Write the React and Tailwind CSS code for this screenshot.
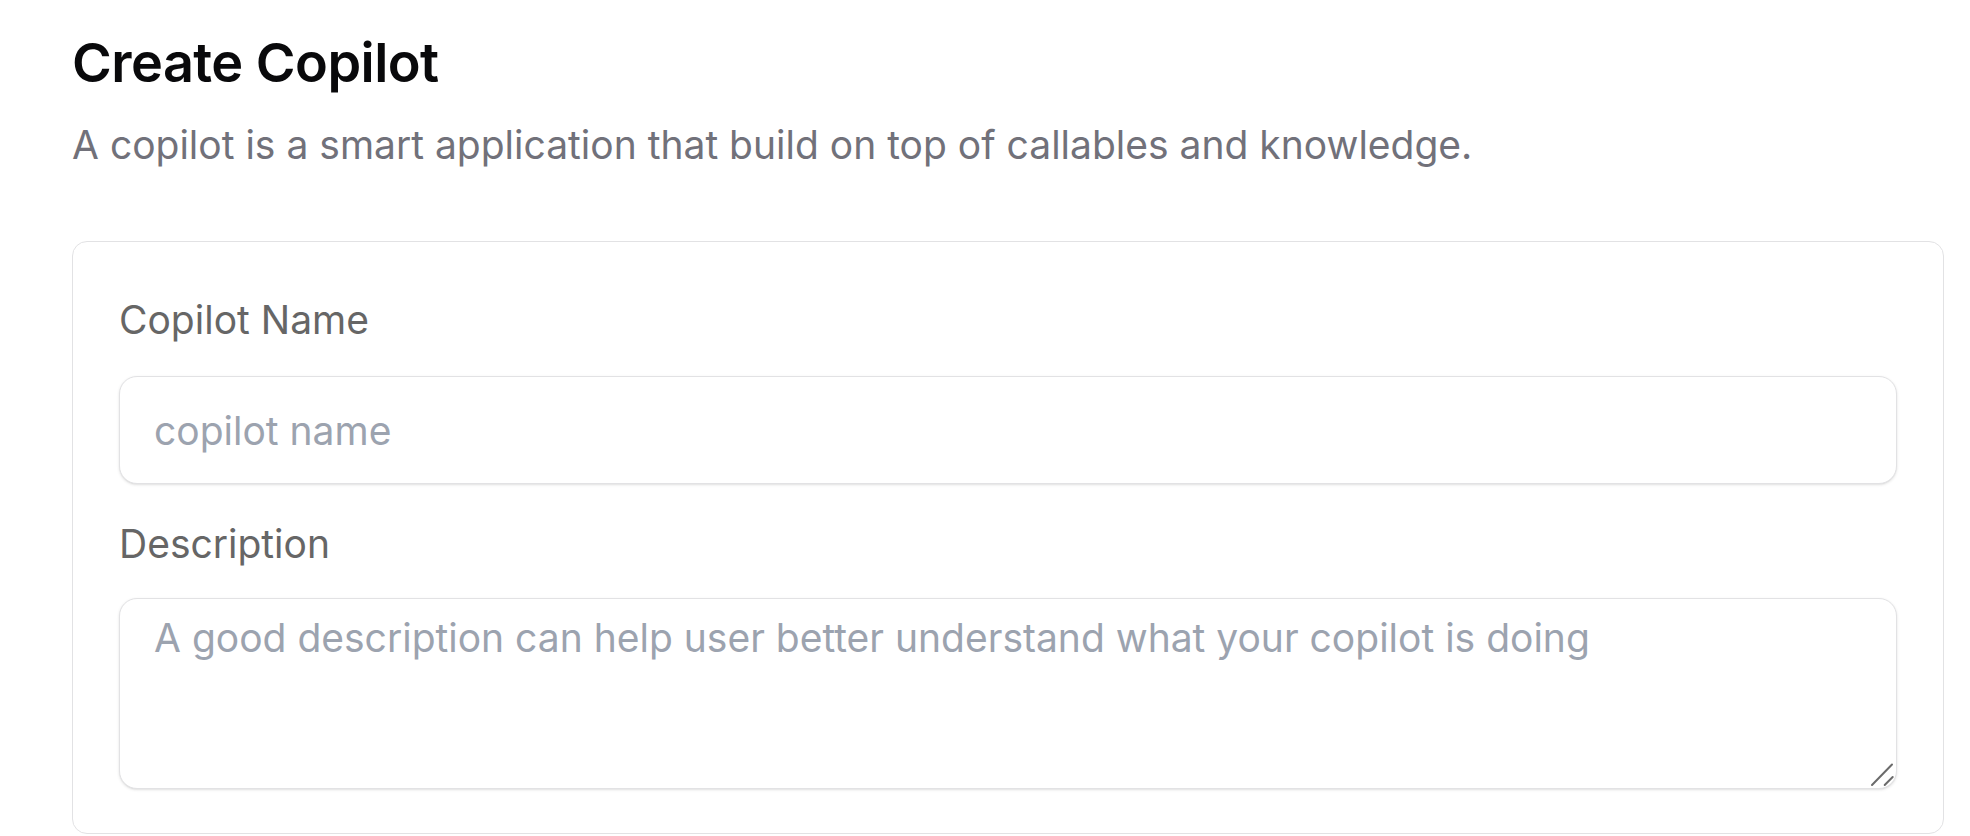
export default function App() {
  return (
    <div
      className="min-h-screen bg-white pl-[72px] pr-[26px] pt-[33px]"
      style={{ fontFamily: "Inter, 'Noto Sans', sans-serif" }}
    >
      <h1 className="text-[54px] leading-[60px] font-semibold tracking-[-0.01em] text-[#09090b]">
        Create Copilot
      </h1>
      <p className="mt-[26px] text-[39px] leading-[52px] text-[#71717a]">
        A copilot is a smart application that build on top of callables and knowledge.
      </p>
      <div className="mt-[70px] rounded-[15px] border border-[#e2e2e4] bg-white px-[46px] pt-[49px] pb-[44px]">
        <div className="flex flex-col">
          <label className="text-[39px] leading-[58px] text-[#666666]">Copilot Name</label>
          <input
            type="text"
            placeholder="copilot name"
            className="mt-[27px] h-[108px] w-full rounded-[18px] border border-[#e2e2e4] bg-white px-[34px] text-[39px] text-[#09090b] shadow-sm outline-none placeholder:text-[#9ca3af]"
          />
          <label className="mt-[31px] text-[39px] leading-[58px] text-[#666666]">Description</label>
          <div className="relative mt-[25px]">
            <textarea
              placeholder="A good description can help user better understand what your copilot is doing"
              className="block h-[191px] w-full resize-none rounded-[18px] border border-[#e2e2e4] bg-white px-[34px] pt-[10px] text-[39px] leading-[58px] text-[#09090b] shadow-sm outline-none placeholder:text-[#9ca3af]"
            />
            <svg
              className="pointer-events-none absolute right-[2px] bottom-[2px]"
              width="25"
              height="25"
              viewBox="0 0 25 25"
            >
              <line x1="2" y1="23" x2="22" y2="2.5" stroke="#6b6b6b" strokeWidth="2" strokeLinecap="round" />
              <line x1="14.7" y1="23" x2="22.7" y2="15" stroke="#6b6b6b" strokeWidth="2" strokeLinecap="round" />
            </svg>
          </div>
        </div>
      </div>
    </div>
  );
}
